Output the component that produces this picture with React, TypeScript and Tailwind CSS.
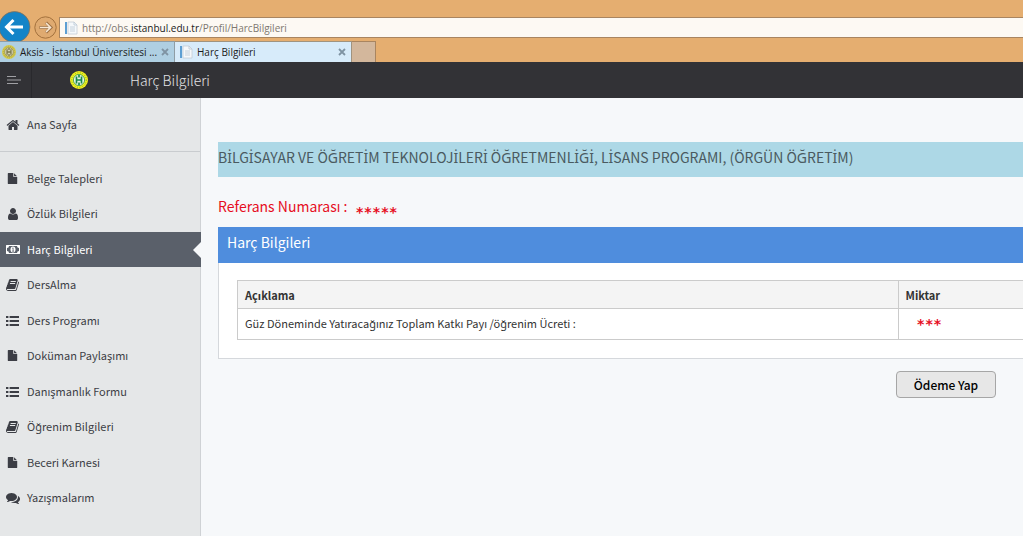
import type { ReactNode } from 'react';

const HOME =
  'M1472 992v480q0 26-19 45t-45 19h-384v-384h-256v384h-384q-26 0-45-19t-19-45v-480q0-1 .5-3t.5-3l575-474 575 474q1 2 1 6zm223-69l-62 74q-8 9-21 11h-3q-13 0-21-7l-692-577-692 577q-12 8-24 7-13-2-21-11l-62-74q-8-10-7-23.5t11-21.5l719-599q32-26 76-26t76 26l244 204v-195q0-14 9-23t23-9h192q14 0 23 9t9 23v408l219 182q10 8 11 21.5t-7 23.5z';
const FILE =
  'M1152 512v-472q22 14 36 28l408 408q14 14 28 36h-472zm-128 32q0 40 28 68t68 28h544v1056q0 40-28 68t-68 28h-1344q-40 0-68-28t-28-68v-1600q0-40 28-68t68-28h800v544z';
const USER =
  'M1536 1399q0 109-62.5 187t-150.5 78h-854q-88 0-150.5-78t-62.5-187q0-85 8.5-160.5t31.5-152 58.5-131 94-89 134.5-34.5q131 128 313 128t313-128q76 0 134.5 34.5t94 89 58.5 131 31.5 152 8.5 160.5zm-256-887q0 159-112.5 271.5t-271.5 112.5-271.5-112.5-112.5-271.5 112.5-271.5 271.5-112.5 271.5 112.5 112.5 271.5z';
const BOOK =
  'M1639 478q40 57 18 129l-275 906q-19 64-76.5 107.5t-122.5 43.5h-923q-77 0-148.5-53.5t-99.5-131.5q-24-67-2-127 0-4 3-27t4-37q1-8-3-21.5t-3-19.5q2-11 8-21t16.5-23.5 16.5-23.5q23-38 45-91.5t30-91.5q3-10 .5-30t-.5-28q3-11 17-28t17-23q21-36 42-92t25-90q1-9-2.5-32t.5-28q4-13 22-30.5t22-22.5q19-26 42.5-84.5t27.5-96.5q1-8-3-25.5t-2-26.5q2-8 9-18t18-23 17-21q8-12 16.5-30.5t15-35 16-36 19.5-32 26.5-23.5 36-11.5 47.5 5.5l-1 3q38-9 51-9h761q74 0 114 56t18 130l-274 906q-36 119-71.5 153.5t-128.5 34.5h-869q-27 0-38 15-11 16-1 43 24 70 144 70h923q29 0 56-15.5t35-41.5l300-987q7-22 5-57 38 15 59 43zm-1064 2q-4 13 2 22.5t20 9.5h608q13 0 25.5-9.5t16.5-22.5l21-64q4-13-2-22.5t-20-9.5h-608q-13 0-25.5 9.5t-16.5 22.5zm-83 256q-4 13 2 22.5t20 9.5h608q13 0 25.5-9.5t16.5-22.5l21-64q4-13-2-22.5t-20-9.5h-608q-13 0-25.5 9.5t-16.5 22.5z';
const COMMENTS =
  'M1408 768q0 139-94 257t-256.5 186.5-353.5 68.5q-86 0-176-16-124 88-278 128-36 9-86 16h-3q-11 0-20.5-8t-11.5-21q-1-3-1-6.5t.5-6.5 2-6l2.5-5 3.5-5.5 4-5 4.5-5 4-4.5q5-6 23-25t26-29.5 22.5-29 25-38.5 20.5-44q-124-72-195-177t-71-224q0-139 94-257t256.5-186.5 353.5-68.5 353.5 68.5 256.5 186.5 94 257zm384 256q0 120-71 224.5t-195 176.5q10 24 20.5 44t25 38.5 22.5 29 26 29.5 23 25q1 1 4 4.5t4.5 5 4 5 3.5 5.5l2.5 5 2 6 .5 6.5-1 6.5q-3 14-13 22t-22 7q-50-7-86-16-154-40-278-128-90 16-176 16-271 0-472-132 58 4 88 4 161 0 309-45t264-129q125-92 192-212t67-254q0-77-23-152 129 71 204 178t75 230z';

function Glyph({ d }: { d: string }) {
  return (
    <svg viewBox="0 0 1792 1792" className="size-3.5" fill="currentColor" aria-hidden="true">
      <path d={d} />
    </svg>
  );
}

const fileIcon = (
  <svg viewBox="0 0 1792 1792" className="size-[11px]" fill="currentColor" aria-hidden="true">
    <path d={FILE} />
  </svg>
);
const bookIcon = <Glyph d={BOOK} />;
const listIcon = (
  <svg viewBox="0 0 13 12" className="h-3 w-[13px]" fill="currentColor" aria-hidden="true">
    <path d="M0 1h2.4v2H0zM3.6 1H13v2H3.6zM0 5h2.4v2H0zM3.6 5H13v2H3.6zM0 9h2.4v2H0zM3.6 9H13v2H3.6z" />
  </svg>
);
const moneyIcon = (
  <svg viewBox="0 0 14 9" className="h-[9px] w-3.5" aria-hidden="true">
    <path
      fill="currentColor"
      fillRule="evenodd"
      d="M.4 0h13.2q.4 0 .4.4v8.2q0 .4-.4.4H.4Q0 9 0 8.600V.4Q0 0 .4 0zM3 1Q3 3 1 3v3q2 0 2 2h8q0-2 2-2V3q-2 0-2-2z"
    />
    <ellipse cx="7" cy="4.500" rx="2.500" ry="3" fill="currentColor" />
    <path d="M6.300 3.300l.8-.5v3.400M6.100 6.200h2" stroke="#5a606a" strokeWidth=".8" fill="none" />
  </svg>
);

type Item = { label: string; icon: ReactNode; active?: boolean };

const items: Item[] = [
  { label: 'Belge Talepleri', icon: fileIcon },
  { label: 'Özlük Bilgileri', icon: <Glyph d={USER} /> },
  { label: 'Harç Bilgileri', icon: moneyIcon, active: true },
  { label: 'DersAlma', icon: bookIcon },
  { label: 'Ders Programı', icon: listIcon },
  { label: 'Doküman Paylaşımı', icon: fileIcon },
  { label: 'Danışmanlık Formu', icon: listIcon },
  { label: 'Öğrenim Bilgileri', icon: bookIcon },
  { label: 'Beceri Karnesi', icon: fileIcon },
  { label: 'Yazışmalarım', icon: <Glyph d={COMMENTS} /> },
];

function NavItem({ label, icon, active }: Item) {
  return (
    <a
      href="#"
      aria-current={active ? 'page' : undefined}
      className={
        active
          ? 'relative flex h-[35px] items-center gap-[7px] bg-[#5a606a] pl-[5px] text-white'
          : 'relative flex h-[35px] items-center gap-[7px] pl-[5px] text-[#3c3e45]'
      }
    >
      <span className="flex w-[15px] justify-center">{icon}</span>
      <span className="pb-0.5">{label}</span>
      {active && (
        <svg viewBox="0 0 8 16" className="absolute top-[10px] right-0 h-4 w-2" aria-hidden="true">
          <path d="M8 0v16L0 8z" fill="#f6f8fa" />
        </svg>
      )}
    </a>
  );
}

/* The body face has no dotted capital I, so that letter is set in Noto Sans. */
function DottedCaps({ text }: { text: string }) {
  return text
    .split(/(İ)/)
    .map((part, i) =>
      part === 'İ' ? (
        <span key={i} className="font-['Noto_Sans',sans-serif]">
          {part}
        </span>
      ) : (
        part
      ),
    );
}

function PageIcon() {
  return (
    <svg viewBox="0 0 14 14" className="size-3.5 shrink-0" aria-hidden="true">
      <path d="M4 1h6l3 3v9H4z" fill="#f5f8fb" stroke="#c3ccd6" strokeWidth=".8" />
      <path d="M10 1v3h3M6 6h5M6 8h5M6 10h5" stroke="#b9c6d6" strokeWidth=".8" fill="none" />
      <path d="M1 1h2v12H1z" fill="#5d9fd3" />
    </svg>
  );
}

function Seal({ faded = false }: { faded?: boolean }) {
  const ring = faded ? '#d3c94a' : '#f4ef1c';
  const ink = faded ? '#7d7a4c' : '#178a4c';
  return (
    <svg viewBox="0 0 18 18" className={faded ? 'size-3.5 shrink-0' : 'size-[18px] shrink-0'} aria-hidden="true">
      <circle cx="9" cy="9" r="9" fill={ring} />
      <circle cx="9" cy="9" r="7.300" fill="none" stroke={ink} strokeWidth=".6" strokeDasharray="1 1.500" />
      <circle cx="9" cy="9" r="5.600" fill={faded ? '#d5d3b0' : '#e8f6e2'} stroke={ink} strokeWidth=".7" />
      <path d="M6.500 5.500v7M11.500 5.500v7M6.500 9h5M9 4v2.500M9 11.500v2.500" stroke={ink} strokeWidth="1.700" fill="none" />
    </svg>
  );
}

function Cross() {
  return (
    <svg viewBox="0 0 8 8" className="size-2" aria-hidden="true">
      <path d="M1 1l6 6M7 1L1 7" stroke="#7f93a3" strokeWidth="1.800" />
    </svg>
  );
}

function BrowserChrome() {
  return (
    <div className="bg-[#e5ae70] font-['Open_Sans','Noto_Sans',sans-serif] text-[10px] leading-4 text-[#1b1b1b]">
      <div className="flex h-[41px] items-end overflow-hidden">
        <button type="button" aria-label="Geri" className="-mb-px shrink-0">
          <svg viewBox="0 0 31 31" className="size-[31px]" aria-hidden="true">
            <circle cx="14.500" cy="16" r="15.500" fill="#1384c8" stroke="#8f6d4a" strokeWidth=".7" />
            <path d="M23 16H7M13.500 9L6.500 16l7 7" stroke="#fff" strokeWidth="3" fill="none" />
          </svg>
        </button>
        <button type="button" aria-label="İleri" className="mb-0.5 ml-[3px] shrink-0">
          <svg viewBox="0 0 23 23" className="size-[23px]" aria-hidden="true">
            <circle cx="11.500" cy="11.500" r="10.700" fill="#dfaa70" stroke="#a3713d" strokeWidth="1" />
            <path d="M5.500 11.500h11M12 6.500l5 5-5 5" stroke="#9c7044" strokeWidth="3" fill="none" />
            <path d="M6 11.500h10M12 7l4.500 4.500-4.500 4.500" stroke="#f6e6d2" strokeWidth="1.700" fill="none" />
          </svg>
        </button>
        <div className="mb-[3px] ml-0.5 flex h-[21px] flex-1 items-center gap-1 border border-r-0 border-[#a98560] bg-[#fdf9f3] pl-1">
          <PageIcon />
          <span className="text-[#7d7871]">
            http://obs.<span className="text-[#1b1b1b]">istanbul.edu.tr</span>/Profil/HarcBilgileri
          </span>
        </div>
      </div>
      <div className="flex h-[21px] items-stretch">
        <div className="flex w-[175px] items-center gap-1 border-t border-r border-[#8f9da5] bg-[#afcfe2] pl-0.5">
          <Seal faded />
          <span className="flex-1 whitespace-nowrap">Aksis - İstanbul Üniversitesi ...</span>
          <button type="button" aria-label="Sekmeyi kapat" className="pr-[5px]">
            <Cross />
          </button>
        </div>
        <div className="flex w-[177px] items-center gap-1 border-t border-r border-[#a0937f] bg-[#d7ebfa] pl-1">
          <PageIcon />
          <span className="flex-1 whitespace-nowrap">Harç Bilgileri</span>
          <button type="button" aria-label="Sekmeyi kapat" className="pr-[5px]">
            <Cross />
          </button>
        </div>
        <button
          type="button"
          aria-label="Yeni sekme"
          className="w-6 border-t border-r border-[#a98560] bg-[#d3b79c]"
        />
      </div>
    </div>
  );
}

export default function App() {
  return (
    <div className="flex min-h-screen flex-col bg-[#f6f8fa] font-['Noto_Sans_CJK_SC','Noto_Sans',sans-serif] text-[11px] leading-5 text-[#333]">
      <BrowserChrome />
      <header className="flex h-9 items-center bg-[#323236] text-[#e2e2e4]">
        <button
          type="button"
          aria-label="Menü"
          className="flex h-full w-8 items-center border-r border-[#29292d] pl-[7px]"
        >
          <svg viewBox="0 0 14 10" className="h-2.5 w-3.5" aria-hidden="true">
            <path d="M0 1.500h9M0 5h14M0 8.500h11" stroke="#a0a0a4" strokeWidth="1" />
          </svg>
        </button>
        <div className="ml-[38px]">
          <Seal />
        </div>
        <h1 className="ml-[42px] text-[14px] font-light">Harç Bilgileri</h1>
      </header>
      <div className="flex flex-1">
        <nav className="w-[201px] shrink-0 border-r border-[#cfd2d5] bg-[#e5e7e8]">
          <div className="border-b border-[#c9cccf] pt-[9px] pb-[9px]">
            <NavItem label="Ana Sayfa" icon={<Glyph d={HOME} />} />
          </div>
          <ul className="-mr-px pt-[9px]">
            {items.map((item) => (
              <li key={item.label} className="even:mb-px">
                <NavItem {...item} />
              </li>
            ))}
          </ul>
        </nav>
        <main className="min-w-0 flex-1 pt-11 pl-[17px]">
          <h2 className="bg-[#add8e6] pt-[5px] pb-[9px] text-[14px] text-[#4a5a60]">
            <DottedCaps text="BİLGİSAYAR VE ÖĞRETİM TEKNOLOJİLERİ ÖĞRETMENLİĞİ, LİSANS PROGRAMI, (ÖRGÜN ÖĞRETİM)" />
          </h2>
          <p className="mt-[19px] flex items-end gap-2 text-[14px] text-[#e60f1f]">
            Referans Numarası :
            <span className="font-['DejaVu_Sans_Mono',monospace] leading-2 font-bold">*****</span>
          </p>
          <section className="mt-[11px] border-b border-l border-[#d5d8dc] bg-white">
            <h3 className="-ml-px h-9 bg-[#4f8ddd] px-[9px] pt-[5px] text-[14px] text-white">Harç Bilgileri</h3>
            <div className="pt-[17px] pb-[18px] pl-[18px]">
              <table className="w-full border-collapse border border-r-0 border-[#cbcbcb] text-left">
                <thead>
                  <tr className="h-7 border-b border-[#cbcbcb] bg-[#f4f4f4]">
                    <th className="px-[7px] font-bold">Açıklama</th>
                    <th className="w-[125px] border-l border-[#cbcbcb] px-[7px] font-bold">Miktar</th>
                  </tr>
                </thead>
                <tbody>
                  <tr className="h-[31px]">
                    <td className="px-[7px] pb-0.5">Güz Döneminde Yatıracağınız Toplam Katkı Payı /öğrenim Ücreti :</td>
                    <td className="border-l border-[#cbcbcb] px-[18px] font-['DejaVu_Sans_Mono',monospace] text-[14px] font-bold text-[#e60f1f]">
                      ***
                    </td>
                  </tr>
                </tbody>
              </table>
            </div>
          </section>
          <div className="flex justify-end pt-3 pr-[27px]">
            <button
              type="button"
              className="h-[27px] w-[100px] rounded border border-[#a6a6a6] bg-[#e7e7e7] text-[12px] font-medium text-black"
            >
              Ödeme Yap
            </button>
          </div>
        </main>
      </div>
    </div>
  );
}
